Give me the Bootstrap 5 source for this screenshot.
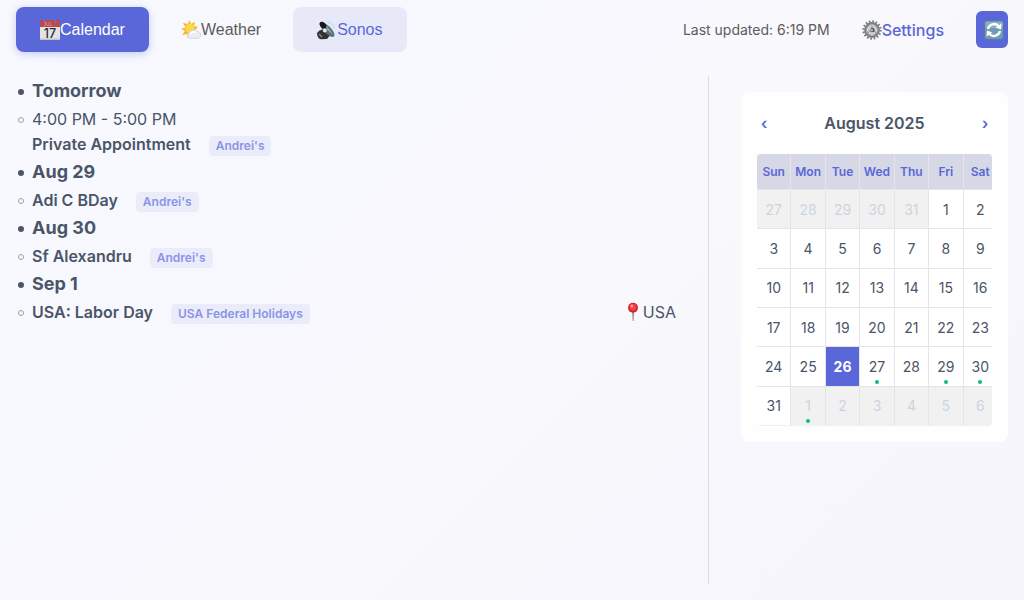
<!DOCTYPE html>
<html lang="en">
<head>
<meta charset="utf-8">
<meta name="viewport" content="width=device-width, initial-scale=1">
<title>Calendar</title>
<link href="https://cdn.jsdelivr.net/npm/bootstrap@5.3.0/dist/css/bootstrap.min.css" rel="stylesheet">
<style>
:root { --accent: #5a67d8; --ink: #4a5568; }
body { font-family: Inter, "Liberation Sans", sans-serif; color: var(--ink); background: linear-gradient(135deg, #f7f9ff 0%, #f8f8fd 50%, #f6f5fb 100%) fixed; }
.topbar { height: 60px; padding-bottom: 1px; }
.tab-btn { font: 16px/24px "Liberation Sans", sans-serif; height: 45px; padding: 0 24px; border: 0; border-radius: 8px; color: #5c5c5c; }
.tab-btn.active, .tab-btn.active:hover { background: var(--accent) !important; color: #fff !important; box-shadow: 0 2px 8px #5a67d84d; }
.tab-btn.soft { background: #e8e9f8; color: var(--accent); }
.tab-btn svg, .settings svg { width: 20px; height: 20px; flex: none; }
.updated { font-size: 14px; color: #5c5c5c; }
.settings { color: var(--accent); font-weight: 500; font-size: 16px; }
.refresh { width: 32px; height: 37px; border: 0; border-radius: 6px; background: var(--accent); padding: 0; }
.agenda { padding: 1px 16px 0 16px; line-height: 24px; font-size: 16px; }
.agenda li { position: relative; }
.agenda li::before { content: ""; position: absolute; left: -14px; top: 12px; width: 6px; height: 6px; border-radius: 50%; }
.day-item { font-size: 18px; font-weight: 700; line-height: 28px; }
.day-item::before { background: var(--ink); }
.event-item { padding: 2px 0; }
.event-item::before { border: 1px solid #9aa1ae; }
.event-time { line-height: 25px; }
.event-name { font-weight: 600; }
.source { font-size: 12px; line-height: 20px; font-weight: 600; color: #8b93e8; background: #ebecfa; border-radius: 4px; padding: 0 7px; margin: 4px 0 0 18px; }
.side { flex: 0 0 300px; border-left: 1px solid #dcdce2; padding: 16px 0 0 32px; }
.month-card { background: #fefeff; border-radius: 8px; padding: 16px; }
.month-nav { color: var(--accent); font-size: 16px; font-weight: 600; line-height: 30px; width: 14px; }
.month-title { font-size: 16px; font-weight: 600; }
.grid-clip { overflow: hidden; border-radius: 4px; }
.month-table { width: calc(100% + 6px); height: 272px; table-layout: fixed; border-collapse: separate; border-spacing: 0; text-align: center; }
.month-table th, .month-table td { padding: 0; vertical-align: middle; border-right: 1px solid #e5e5e8; border-bottom: 1px solid #e5e5e8; }
.month-table th { height: 36px; font-size: 12px; font-weight: 600; color: var(--accent); background: #d6d8e5; }
.month-table td { position: relative; font-size: 14px; background: #fff; }
.month-table td.other { color: #cbd5e0; background: #f1f1f1; }
.month-table td.today { color: #fff; background: var(--accent); font-weight: 700; }
.month-table tr:last-child td { border-bottom-color: #f1f1f1; }
.month-table td.busy::after { content: ""; position: absolute; left: calc(50% - 2px); bottom: 2px; width: 4px; height: 4px; border-radius: 50%; background: #10b981; }
</style>
</head>
<body class="min-vh-100 d-flex flex-column">
<header class="topbar d-flex align-items-center justify-content-between px-3">
  <nav class="d-flex gap-2">
    <button type="button" class="btn tab-btn active d-flex align-items-center">
      <svg viewBox="0 0 20 20" aria-hidden="true"><path d="M0 0h20v20H0z" fill="#e3e3e6"/><path d="M0 0h20v7H0z" fill="#b9494d"/><path d="M0 18.500h20V20H0z" fill="#c3c3c8"/><path d="M4.500 0v3M15.500 0v3" stroke="#7b6fc8" stroke-width="1.500"/><text x="3.500" y="6" font-family="Liberation Sans" font-size="5" fill="#e0a0a2">JUL</text><text x="10" y="18" text-anchor="middle" font-family="Inter" font-weight="500" font-size="12.500" fill="#2b2b30">17</text></svg>Calendar
    </button>
    <button type="button" class="btn tab-btn d-flex align-items-center">
      <svg viewBox="0 0 20 20" aria-hidden="true"><path d="m8.500 0 1.500 4 4-2-1 4 4 1-3 3 2 4H9l-3 4v-4l-5 1 3-4-4-2 4.500-1.500L2 3l5 1z" fill="#f5b62d"/><circle cx="9" cy="8.500" r="4.800" fill="#ffd643"/><path d="M9 18.500a3 3 0 0 1-.4-5.900 3.800 3.800 0 0 1 6.800-1.100 3.500 3.500 0 0 1 4.400 3.700c0 2-1.400 3.300-3.500 3.300z" fill="#e9edf3" stroke="#c2cad6" stroke-width=".6"/><path d="M9 13.500c2-2 4-2 6-1.500" stroke="#fff" stroke-width="1.500" fill="none"/></svg>Weather
    </button>
    <button type="button" class="btn tab-btn soft d-flex align-items-center">
      <svg viewBox="0 0 20 20" aria-hidden="true"><path d="M2.500 10.500 7 9l6 6.500-3 3.500-6 .3C1 19 0 15 0 13z" fill="#303236"/><path d="M3 2.500C7 1 17 9 17.500 15c0 2-2 2.500-4 1.500C9 14 1.500 7 3 2.500z" fill="#5b7076"/><path d="M3 2.500c2-2 6 1 6.500 3.500S5.500 9 4 7 2 4 3 2.500z" fill="#151719"/><path d="m9 5 7.500 10-6-5z" fill="#9eb4b8"/><circle cx="7.800" cy="10.500" r="2" fill="#dfe4e5"/><path d="m2 14 3 3" stroke="#8b8e91" stroke-width="1.300"/><path d="M10 1c4 0 7 3 8 8M11 3c3 0 5 3 5.500 5" fill="none" stroke="#a8e4ef" stroke-width=".8"/></svg>Sonos
    </button>
  </nav>
  <div class="d-flex align-items-center gap-4">
    <span class="updated me-2">Last updated: 6:19 PM</span>
    <a href="#settings" class="settings d-flex align-items-center text-decoration-none me-2">
      <svg viewBox="0 0 20 20" aria-hidden="true"><circle cx="10" cy="10" r="8.600" fill="none" stroke="#77797c" stroke-width="2.200" stroke-dasharray="1.600 1.780"/><circle cx="10" cy="10" r="6.400" fill="none" stroke="#7c7f82" stroke-width="3"/><circle cx="10" cy="10" r="5.500" fill="none" stroke="#b4b7ba" stroke-width=".8"/><circle cx="10" cy="10" r="4.400" fill="#c8cacd"/><path d="M10 10V5.500M10 10l-4 2.500M10 10l4 2.500" stroke="#85888b" stroke-width="1"/><circle cx="10.500" cy="10" r="2.100" fill="#45484c"/><circle cx="10" cy="10" r=".9" fill="#eee"/></svg>Settings
    </a>
    <button type="button" class="btn refresh d-flex align-items-center justify-content-center ms-0" aria-label="Refresh">
      <svg class="ms-1" width="20" height="20" viewBox="0 0 20 20" aria-hidden="true"><rect x=".5" y=".5" width="19" height="19" rx="3" fill="#6f9aba" stroke="#547b9e"/><path d="M1.500 2h17v6h-17z" fill="#8badc7"/><path d="M4 9a6.200 6.200 0 0 1 10.500-3M16 11a6.200 6.200 0 0 1-10.500 3" fill="none" stroke="#fff" stroke-width="2.400"/><path d="m17.500 3.500-.5 6-5.500-2zM2.500 16.500l.5-6 5.500 2z" fill="#fff"/></svg>
    </button>
  </div>
</header>
<main class="d-flex flex-grow-1 p-3">
  <section class="flex-grow-1 pe-3">
    <ul class="agenda list-unstyled mb-0">
      <li class="day-item">Tomorrow</li>
      <li class="event-item"><div class="event-time">4:00 PM - 5:00 PM</div><div class="d-flex"><span class="event-name">Private Appointment</span><span class="source">Andrei's</span></div></li>
      <li class="day-item">Aug 29</li>
      <li class="event-item"><div class="d-flex"><span class="event-name">Adi C BDay</span><span class="source">Andrei's</span></div></li>
      <li class="day-item">Aug 30</li>
      <li class="event-item"><div class="d-flex"><span class="event-name">Sf Alexandru</span><span class="source">Andrei's</span></div></li>
      <li class="day-item">Sep 1</li>
      <li class="event-item"><div class="d-flex"><span class="event-name">USA: Labor Day</span><span class="source">USA Federal Holidays</span>
        <span class="ms-auto d-flex align-items-center"><svg width="20" height="20" viewBox="0 0 20 20" aria-hidden="true"><path d="M9.200 10h1.800l-.5 9h-.8z" fill="#8d8580"/><circle cx="10" cy="5.800" r="5" fill="#d3222b"/><circle cx="10" cy="5.200" r="3.500" fill="#ee4148"/><circle cx="8.800" cy="4" r="1.500" fill="#ff9c9b"/></svg>USA</span></div></li>
    </ul>
  </section>
  <aside class="side">
    <div class="month-card">
      <div class="d-flex justify-content-between align-items-center mb-3">
        <button type="button" class="btn p-0 border-0 month-nav" aria-label="Previous month">‹</button>
        <div class="month-title">August 2025</div>
        <button type="button" class="btn p-0 border-0 month-nav" aria-label="Next month">›</button>
      </div>
      <div class="grid-clip">
        <table class="month-table">
          <thead><tr><th>Sun</th><th>Mon</th><th>Tue</th><th>Wed</th><th>Thu</th><th>Fri</th><th>Sat</th></tr></thead>
          <tbody>
            <tr><td class="other">27</td><td class="other">28</td><td class="other">29</td><td class="other">30</td><td class="other">31</td><td>1</td><td>2</td></tr>
            <tr><td>3</td><td>4</td><td>5</td><td>6</td><td>7</td><td>8</td><td>9</td></tr>
            <tr><td>10</td><td>11</td><td>12</td><td>13</td><td>14</td><td>15</td><td>16</td></tr>
            <tr><td>17</td><td>18</td><td>19</td><td>20</td><td>21</td><td>22</td><td>23</td></tr>
            <tr><td>24</td><td>25</td><td class="today">26</td><td class="busy">27</td><td>28</td><td class="busy">29</td><td class="busy">30</td></tr>
            <tr><td>31</td><td class="other busy">1</td><td class="other">2</td><td class="other">3</td><td class="other">4</td><td class="other">5</td><td class="other">6</td></tr>
          </tbody>
        </table>
      </div>
    </div>
  </aside>
</main>
<script src="https://cdn.jsdelivr.net/npm/bootstrap@5.3.0/dist/js/bootstrap.bundle.min.js"></script>
</body>
</html>
